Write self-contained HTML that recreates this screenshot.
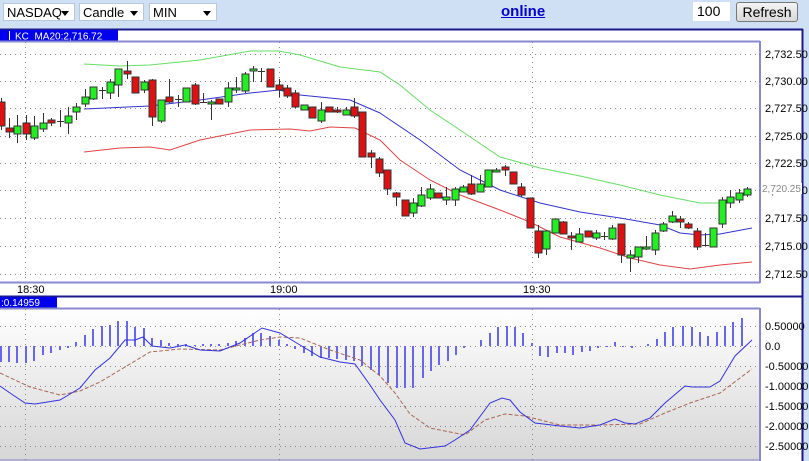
<!DOCTYPE html>
<html><head><meta charset="utf-8"><style>
html,body{margin:0;padding:0;width:809px;height:461px;overflow:hidden;background:#cfe0f5;font-family:"Liberation Sans",sans-serif}
.sel{position:absolute;top:3px;height:18px;background:#fff;border:1px solid #b8c8dc;font-size:13px;line-height:18px;padding-left:3px;box-sizing:border-box}
.sel:after{content:"";position:absolute;right:5px;top:7px;border-left:4px solid transparent;border-right:4px solid transparent;border-top:5px solid #000}
</style></head><body>
<div class="sel" style="left:3px;width:72px">NASDAQ</div>
<div class="sel" style="left:79px;width:65px">Candle</div>
<div class="sel" style="left:149px;width:68px">MIN</div>
<div style="position:absolute;left:501px;top:3px;font-size:15px;font-weight:bold;color:#0000cc;text-decoration:underline">online</div>
<div style="position:absolute;left:693px;top:2px;width:37px;height:19px;background:#fff;font-size:14px;line-height:19px;padding-left:4px;box-sizing:border-box">100</div>
<div style="position:absolute;left:736px;top:2px;width:62px;height:20px;background:linear-gradient(#f4f4f4,#d8d8d8);border:1px solid #777;border-radius:3px;font-size:14px;line-height:19px;text-align:center;box-sizing:border-box">Refresh</div>
<svg id="s" width="809" height="461" style="position:absolute;left:0;top:0" xmlns="http://www.w3.org/2000/svg">
<defs><linearGradient id="g" x1="0" y1="0" x2="0" y2="1"><stop offset="0" stop-color="#fff"/><stop offset="1" stop-color="#d6d6d6"/></linearGradient></defs>
<rect x="0" y="29" width="803" height="432" fill="#fff"/>
<rect x="0" y="308" width="760" height="153" fill="url(#g)"/>
<line x1="0" y1="29.5" x2="803" y2="29.5" stroke="#1a1a8c" stroke-width="2"/>
<line x1="802.5" y1="29" x2="802.5" y2="461" stroke="#1a1a8c" stroke-width="2"/>
<rect x="0" y="30" width="118" height="11" fill="#0000ee"/>
<line x1="9.5" y1="31" x2="9.5" y2="40" stroke="#fff"/>
<text x="15" y="39.5" font-size="10" fill="#fff" font-family="Liberation Sans,sans-serif">KC_MA20:2,716.72</text>
<line x1="0" y1="41.5" x2="760" y2="41.5" stroke="#8a88d0" stroke-width="2"/>
<line x1="760" y1="41" x2="760" y2="283" stroke="#8a88d0" stroke-width="2"/>
<line x1="0" y1="282.5" x2="760" y2="282.5" stroke="#8a88d0" stroke-width="2"/>
<line x1="0" y1="296.5" x2="803" y2="296.5" stroke="#1a1a8c" stroke-width="2"/>
<rect x="0" y="297" width="57" height="11" fill="#0000ee"/>
<text x="1" y="306" font-size="10" fill="#fff" font-family="Liberation Sans,sans-serif">:0.14959</text>
<line x1="0" y1="308.5" x2="760" y2="308.5" stroke="#8a88d0" stroke-width="2"/>
<line x1="760" y1="308" x2="760" y2="461" stroke="#8a88d0" stroke-width="2"/>
<line x1="0" y1="460" x2="760" y2="460" stroke="#8a88d0" stroke-width="1"/>
<g id="grid" stroke="#888" stroke-dasharray="1,4" stroke-width="1"></g>
<g font-size="11" fill="#000" font-family="Liberation Sans,sans-serif">
<text x="765" y="58">2,732.50</text><text x="765" y="85">2,730.00</text><text x="765" y="112">2,727.50</text>
<text x="765" y="140">2,725.00</text><text x="765" y="167">2,722.50</text><text x="765" y="194">2,720.00</text>
<text x="765" y="222">2,717.50</text><text x="765" y="250">2,715.00</text><text x="765" y="278">2,712.50</text>
<text x="17" y="293">18:30</text><text x="270" y="293">19:00</text><text x="523" y="293">19:30</text>
<text x="765" y="330">0.50000</text><text x="765" y="350">0.0</text><text x="765" y="370">-0.50000</text>
<text x="765" y="390">-1.00000</text><text x="765" y="410">-1.50000</text><text x="765" y="430">-2.00000</text><text x="765" y="450">-2.50000</text>
</g>
<polyline fill="none" stroke="#66dd66" stroke-width="1" points="84,64 120,66 150,65 200,60 250,51 279,51 300,55 340,67 380,72 400,85 430,110 460,130 500,157 540,168 580,176 620,185 660,195 700,203 720,203 752,193"/>
<polyline fill="none" stroke="#3333cc" stroke-width="1" points="84,109 150,106 200,100 250,93 279,90 300,95 350,100 380,113 420,140 460,170 500,190 540,203 580,212 620,218 660,225 680,233 700,235 720,234 752,228"/>
<polyline fill="none" stroke="#e04444" stroke-width="1" points="84,152 120,148 150,147 170,150 200,140 250,130 290,129 310,131 330,127 355,128 380,140 400,160 430,180 460,195 500,210 530,222 560,237 600,248 630,258 660,265 690,269 720,265 752,262"/>
<g id="c"></g>
<g id="h" stroke="#6666ee" stroke-width="2"></g>
<polyline fill="none" stroke="#aa6655" stroke-width="1" stroke-dasharray="4,2" points="0,373 30,387 60,395 80,391 100,382 120,370 150,352 180,349 220,350 260,340 280,337 300,338 330,350 360,360 380,376 395,393 410,414 430,428 465,435 485,420 505,414 525,416 560,425 600,425 640,424 665,413 690,403 720,393 752,369"/>
<polyline fill="none" stroke="#3333dd" stroke-width="1" points="0,386 10,393 25,403 35,404 60,400 80,388 95,370 110,358 125,340 135,340 143,337 152,346 170,348 185,345 200,350 220,351 240,343 262,328 280,333 300,345 320,357 340,362 355,364 370,385 380,400 395,420 405,443 420,449 445,446 455,440 470,430 490,403 502,398 510,400 520,412 535,423 560,426 580,428 600,425 615,419 625,423 635,424 650,418 665,403 685,386 692,387 710,387 720,381 735,356 752,340"/>
<rect x="761" y="183" width="41" height="11" fill="#fff"/>
<text x="762" y="192" font-size="10" fill="#888">2,720.25</text>
</svg>
<script>
var NS="http://www.w3.org/2000/svg",g=document.getElementById('grid');
function L(p,x1,y1,x2,y2){var l=document.createElementNS(NS,'line');l.setAttribute('x1',x1);l.setAttribute('y1',y1);l.setAttribute('x2',x2);l.setAttribute('y2',y2);p.appendChild(l);return l;}
[54,81,108,136,163,190,218,246,274].forEach(function(y){L(g,0,y+.5,758,y+.5)});
[326,346,366,386,406,426,446].forEach(function(y){L(g,0,y+.5,758,y+.5)});
[25,279,532].forEach(function(x){L(g,x+.5,42,x+.5,282);L(g,x+.5,309,x+.5,460)});
var C=[[1,102,126,98,130,'r'],[9,128,132,118,138,'r'],[17,126,134,115,143,'g'],[26,123,134,115,140,'r'],[34,126,138,116,140,'g'],[43,123,129,113,132,'g'],[51,120,123,118,126,'r'],[60,121,121,110,127,'x'],[68,116,123,107,134,'g'],[76,107,112,103,120,'g'],[85,97,104,89,107,'g'],[93,87,99,87,100,'g'],[102,90,90,87,99,'x'],[110,82,93,79,99,'g'],[118,69,85,69,97,'g'],[127,71,74,61,79,'r'],[135,77,93,77,93,'r'],[144,82,90,80,93,'g'],[152,80,117,79,126,'r'],[161,100,121,100,123,'g'],[169,97,102,79,103,'r'],[178,99,99,95,107,'x'],[186,88,102,88,102,'g'],[195,85,104,83,105,'r'],[203,102,102,93,103,'x'],[211,102,104,100,120,'g'],[219,99,104,99,104,'r'],[228,88,102,82,107,'g'],[236,88,90,77,93,'g'],[245,74,91,72,93,'g'],[253,69,71,66,82,'g'],[261,71,71,68,82,'x'],[270,69,87,69,87,'r'],[279,85,90,79,97,'r'],[287,88,96,85,98,'r'],[295,93,107,90,108,'r'],[304,105,110,105,110,'g'],[312,107,118,107,118,'r'],[321,110,121,102,123,'g'],[329,107,112,107,112,'r'],[337,110,112,107,113,'r'],[346,110,115,107,115,'g'],[354,107,116,98,118,'r'],[362,112,157,112,157,'r'],[371,153,157,150,168,'r'],[379,159,173,157,177,'r'],[387,170,189,170,195,'r'],[396,193,197,192,206,'r'],[405,200,216,200,216,'r'],[413,203,213,198,217,'g'],[421,195,206,187,207,'g'],[430,189,198,184,200,'g'],[438,193,198,193,198,'r'],[446,197,200,187,205,'g'],[455,189,200,187,206,'g'],[463,187,192,185,192,'g'],[471,184,194,175,195,'r'],[480,184,192,175,192,'g'],[488,170,187,170,187,'g'],[496,170,172,168,172,'g'],[505,167,170,165,176,'r'],[513,172,184,172,184,'r'],[521,187,195,183,197,'r'],[530,198,228,198,228,'r'],[538,231,253,225,258,'r'],[546,231,249,230,255,'g'],[555,219,233,219,233,'g'],[563,222,234,221,234,'r'],[571,236,238,232,250,'r'],[579,234,242,228,242,'g'],[588,231,237,231,237,'r'],[596,233,238,230,240,'g'],[604,236,236,232,240,'x'],[612,228,239,225,240,'g'],[621,224,255,224,263,'r'],[630,255,258,250,272,'g'],[638,247,257,247,263,'g'],[646,247,249,236,250,'g'],[655,233,250,230,255,'g'],[663,224,231,222,232,'g'],[672,216,222,211,223,'g'],[680,219,222,216,228,'r'],[688,224,228,222,229,'r'],[697,231,247,228,250,'r'],[705,245,245,233,245,'x'],[713,228,247,228,247,'g'],[722,200,224,197,228,'g'],[730,197,203,190,208,'g'],[739,193,200,189,203,'g'],[747,189,195,187,197,'g']];
var cg=document.getElementById('c');
C.forEach(function(c){var w=L(cg,c[0]+.5,c[3],c[0]+.5,c[4]);w.setAttribute('stroke','#333');
 if(c[5]=='x'){var t=L(cg,c[0]-3,c[1]+.5,c[0]+4,c[1]+.5);t.setAttribute('stroke','#333');return;}
 var r=document.createElementNS(NS,'rect');r.setAttribute('x',c[0]-3);r.setAttribute('y',c[1]);r.setAttribute('width',7);r.setAttribute('height',Math.max(2,c[2]-c[1]));
 r.setAttribute('fill',c[5]=='g'?'#22ee22':'#dd1111');r.setAttribute('stroke','#333');r.setAttribute('stroke-width','1');cg.appendChild(r);});
var H=[[1,362],[9,362],[17,363],[26,363],[34,361],[43,355],[51,353],[60,350],[68,348],[76,342],[85,335],[93,329],[102,326],[110,325],[118,321],[127,321],[135,327],[144,328],[152,338],[161,340],[169,343],[178,344],[186,344],[195,345],[203,344],[211,344],[219,344],[228,343],[236,341],[245,338],[253,333],[261,333],[270,336],[279,340],[287,344],[295,349],[304,353],[312,356],[321,358],[329,358],[337,359],[346,360],[354,361],[362,366],[371,370],[379,375],[388,383],[397,388],[405,388],[413,388],[423,378],[431,371],[439,365],[448,361],[456,355],[464,348],[473,346],[481,340],[490,333],[498,327],[507,326],[515,327],[523,333],[532,343],[540,356],[548,357],[557,353],[565,353],[573,355],[582,352],[590,351],[598,348],[607,347],[615,342],[623,347],[632,348],[640,346],[648,344],[657,339],[665,332],[673,327],[683,326],[692,327],[700,332],[708,336],[717,332],[725,326],[733,322],[742,318]];
var hg=document.getElementById('h');H.forEach(function(b){L(hg,b[0],346,b[0],b[1])});
</script>
</body></html>
